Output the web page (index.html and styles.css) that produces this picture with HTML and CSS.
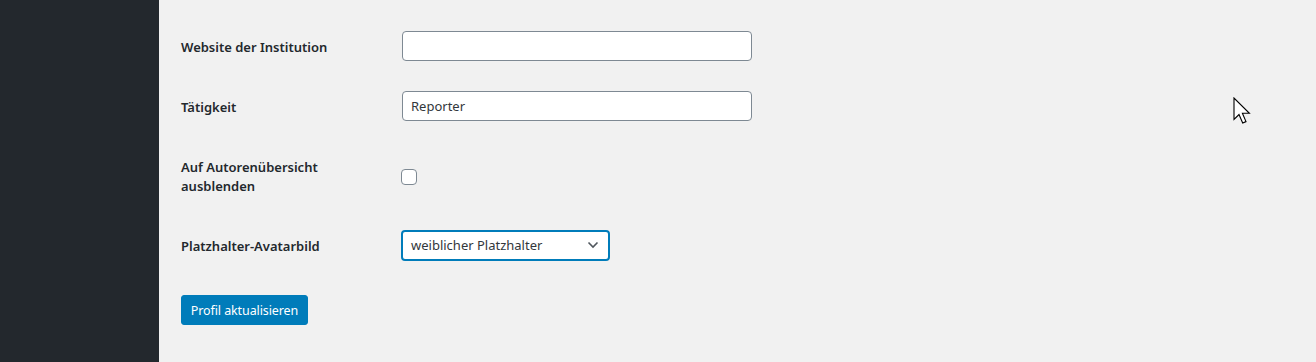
FILE: index.html
```html
<!DOCTYPE html>
<html lang="de">
<head>
<meta charset="utf-8">
<title>Profil</title>
<link rel="stylesheet" href="styles.css">
</head>
<body>
<div class="layout">
  <aside class="sidebar"></aside>
  <main class="content">
    <div class="form-table">
      <div class="row row-a">
        <label class="label label-one" for="web">Website der Institution</label>
        <div class="field"><input id="web" class="text-input" type="text" value=""></div>
      </div>
      <div class="row row-a">
        <label class="label label-one" for="job">Tätigkeit</label>
        <div class="field"><input id="job" class="text-input" type="text" value="Reporter"></div>
      </div>
      <div class="row row-b">
        <label class="label label-wrap" for="hide">Auf Autorenübersicht ausblenden</label>
        <div class="field"><span class="checkbox"></span></div>
      </div>
      <div class="row row-c">
        <label class="label label-one" for="avatar">Platzhalter-Avatarbild</label>
        <div class="field">
          <div class="select">
            <span class="select-text">weiblicher Platzhalter</span>
            <svg class="chevron" width="12" height="8" viewBox="0 0 12 8"><path d="M1.5 1.5 L6 6 L10.5 1.5" fill="none" stroke="#50575e" stroke-width="1.6"/></svg>
          </div>
        </div>
      </div>
    </div>
    <div class="submit">
      <button class="button-primary" type="button">Profil aktualisieren</button>
    </div>
  </main>
</div>
<svg class="cursor" width="20" height="28" viewBox="0 0 20 28"><path d="M1 1 L1 22.5 L6 17.5 L9.7 26 L13 24.6 L9.4 16.3 L16.4 16.3 Z" fill="#fff" stroke="#000" stroke-width="1.1" stroke-linejoin="miter"/></svg>
</body>
</html>
```
FILE: styles.css
```css
html, body {
  margin: 0;
  padding: 0;
  height: 100%;
}
body {
  background: #f1f1f1;
  font-family: "Noto Sans", "Open Sans", sans-serif;
  font-size: 14px;
  color: #23282d;
  overflow: hidden;
}
.layout {
  display: flex;
  height: 362px;
}
.sidebar {
  width: 159px;
  flex: 0 0 159px;
  background: #23282d;
}
.content {
  flex: 1;
  padding: 16px 0 0 22px;
}
.form-table {
  display: flex;
  flex-direction: column;
}
.row {
  display: grid;
  grid-template-columns: 221px auto;
  align-items: center;
}
.row-a { height: 60px; }
.row-b { height: 82px; }
.row-c { height: 54px; }
.label {
  font-weight: 600;
  font-size: 13px;
  line-height: 19px;
  color: #23282d;
}
.label-one {
  padding-top: 2px;
}
.label-wrap {
  width: 150px;
}
.text-input {
  box-sizing: border-box;
  width: 350px;
  height: 30px;
  margin: 0;
  border: 1px solid #7e8993;
  border-radius: 4px;
  background: #fff;
  padding: 0 8px;
  font-family: inherit;
  font-size: 13px;
  color: #32373c;
  outline: none;
}
.field {
  display: flex;
  align-items: center;
}
.checkbox {
  display: block;
  box-sizing: border-box;
  width: 16px;
  height: 16px;
  margin-left: -1px;
  border: 1px solid #7e8993;
  border-radius: 4px;
  background: #fff;
}
.select {
  box-sizing: border-box;
  width: 209px;
  height: 31px;
  margin-left: -1px;
  border: 2px solid #007cba;
  border-radius: 4px;
  background: #fff;
  display: flex;
  align-items: center;
  justify-content: space-between;
  padding: 0 9px 0 8px;
}
.select-text {
  font-size: 13px;
  color: #32373c;
}
.chevron {
  display: block;
}
.submit {
  margin-top: 23px;
}
.button-primary {
  box-sizing: border-box;
  height: 30px;
  width: 127px;
  padding: 0;
  white-space: nowrap;
  border: 1px solid #007cba;
  border-radius: 3px;
  background: #007cba;
  color: #fff;
  font-family: inherit;
  font-size: 12.5px;
  letter-spacing: -0.1px;
  cursor: pointer;
}
.cursor {
  position: absolute;
  left: 1233px;
  top: 97px;
}
```
